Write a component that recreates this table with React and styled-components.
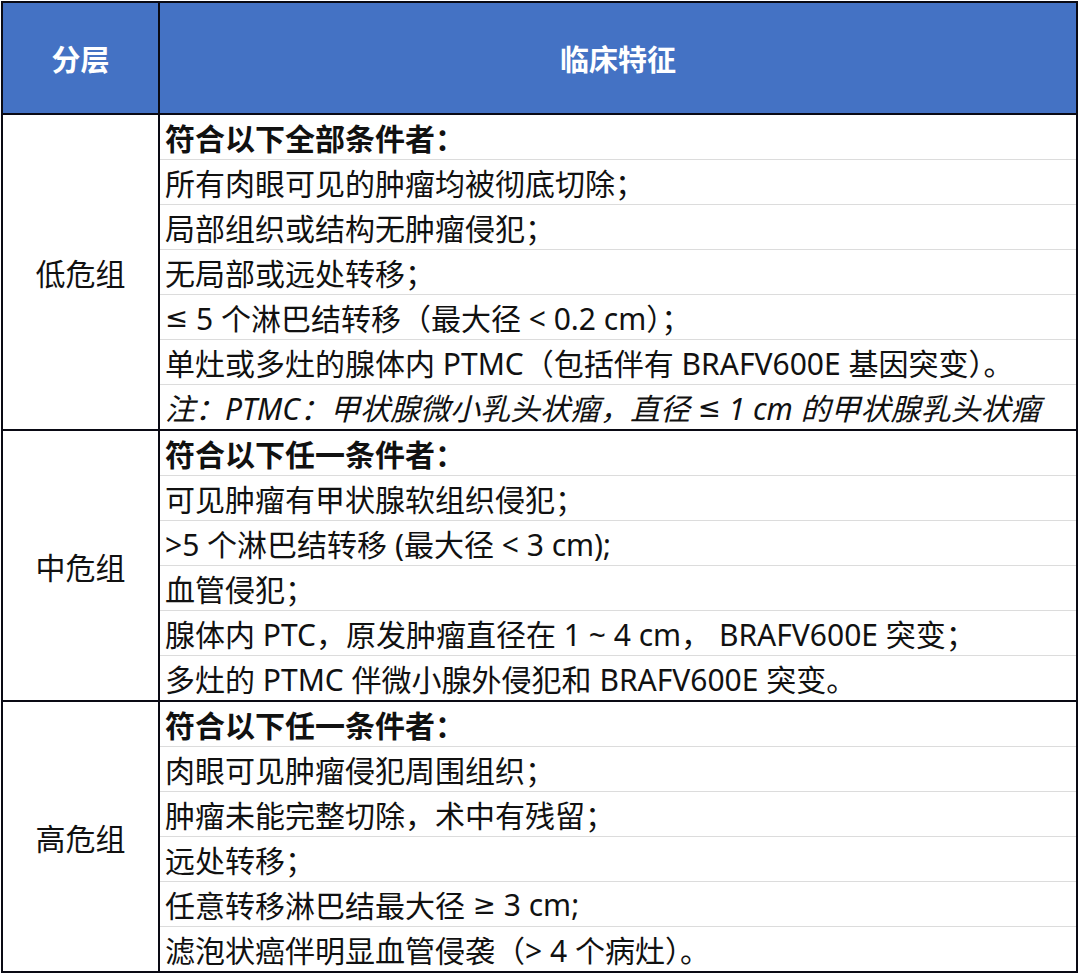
import styled, { createGlobalStyle } from 'styled-components';

const GlobalStyle = createGlobalStyle`
  body {
    margin: 0;
    background: #ffffff;
    font-family: 'Noto Sans', 'Noto Sans CJK SC', sans-serif;
  }
`;

// ≤ / ≥ come out slanted from the CJK font, so they get their own face
const Sym = styled.span`
  font-family: 'DejaVu Sans', 'Liberation Sans', sans-serif;
  font-style: normal;
  font-size: 0.92em;
`;

const groups = [
  {
    label: '低危组',
    items: [
      { text: '符合以下全部条件者：', bold: true },
      { text: '所有肉眼可见的肿瘤均被彻底切除；' },
      { text: '局部组织或结构无肿瘤侵犯；' },
      { text: '无局部或远处转移；' },
      { text: <><Sym>≤</Sym> 5 个淋巴结转移（最大径 &lt; 0.2 cm）；</> },
      { text: '单灶或多灶的腺体内 PTMC（包括伴有 BRAFV600E 基因突变）。' },
      {
        text: <>注：PTMC：甲状腺微小乳头状瘤，直径 <Sym>≤</Sym> 1 cm 的甲状腺乳头状瘤</>,
        italic: true,
      },
    ],
  },
  {
    label: '中危组',
    items: [
      { text: '符合以下任一条件者：', bold: true },
      { text: '可见肿瘤有甲状腺软组织侵犯；' },
      { text: '>5 个淋巴结转移 (最大径 < 3 cm);' },
      { text: '血管侵犯；' },
      { text: '腺体内 PTC，原发肿瘤直径在 1 ~ 4 cm， BRAFV600E 突变；' },
      { text: '多灶的 PTMC 伴微小腺外侵犯和 BRAFV600E 突变。' },
    ],
  },
  {
    label: '高危组',
    items: [
      { text: '符合以下任一条件者：', bold: true },
      { text: '肉眼可见肿瘤侵犯周围组织；' },
      { text: '肿瘤未能完整切除，术中有残留；' },
      { text: '远处转移；' },
      { text: <>任意转移淋巴结最大径 <Sym>≥</Sym> 3 cm;</> },
      { text: '滤泡状癌伴明显血管侵袭（> 4 个病灶）。' },
    ],
  },
];

function App() {
  return (
    <>
      <GlobalStyle />
      <Sheet>
        <HeaderRow>
          <HeadCell $first>分层</HeadCell>
          <HeadCell>临床特征</HeadCell>
        </HeaderRow>
        {groups.map((g, i) => (
          <Section key={g.label} $last={i === groups.length - 1}>
            <GroupCell>{g.label}</GroupCell>
            <ItemList>
              {g.items.map((item, j) => (
                <Item key={j} $bold={item.bold} $italic={item.italic}>
                  {item.text}
                </Item>
              ))}
            </ItemList>
          </Section>
        ))}
      </Sheet>
    </>
  );
}

export default App;

const Sheet = styled.div`
  width: 1073px;
  margin: 1px 0 0 1px;
  border: 2px solid #0a0a14;
  color: #111111;
`;

const HeaderRow = styled.div`
  display: flex;
  height: 110px;
  background-color: #4472c4;
  border-bottom: 2px solid #0a0a14;
`;

const HeadCell = styled.div`
  display: flex;
  align-items: center;
  justify-content: center;
  flex: ${(props) => (props.$first ? '0 0 155px' : '1')};
  border-right: ${(props) => (props.$first ? '2px solid #0a0a14' : 'none')};
  color: #ffffff;
  font-size: 29px;
  font-weight: 700;
`;

const Section = styled.div`
  display: flex;
  border-bottom: ${(props) => (props.$last ? 'none' : '2px solid #0a0a14')};
`;

const GroupCell = styled.div`
  flex: 0 0 155px;
  display: flex;
  align-items: center;
  justify-content: center;
  border-right: 2px solid #0a0a14;
  font-size: 30px;
`;

const ItemList = styled.div`
  flex: 1;
  display: flex;
  flex-direction: column;
`;

const Item = styled.div`
  height: 44px;
  display: flex;
  align-items: center;
  gap: 0;
  padding-left: 5px;
  white-space: pre;
  font-size: 30px;
  font-weight: ${(props) => (props.$bold ? 700 : 400)};
  font-style: ${(props) => (props.$italic ? 'italic' : 'normal')};
  & + & {
    border-top: 1px solid #dcdcdc;
  }
`;
